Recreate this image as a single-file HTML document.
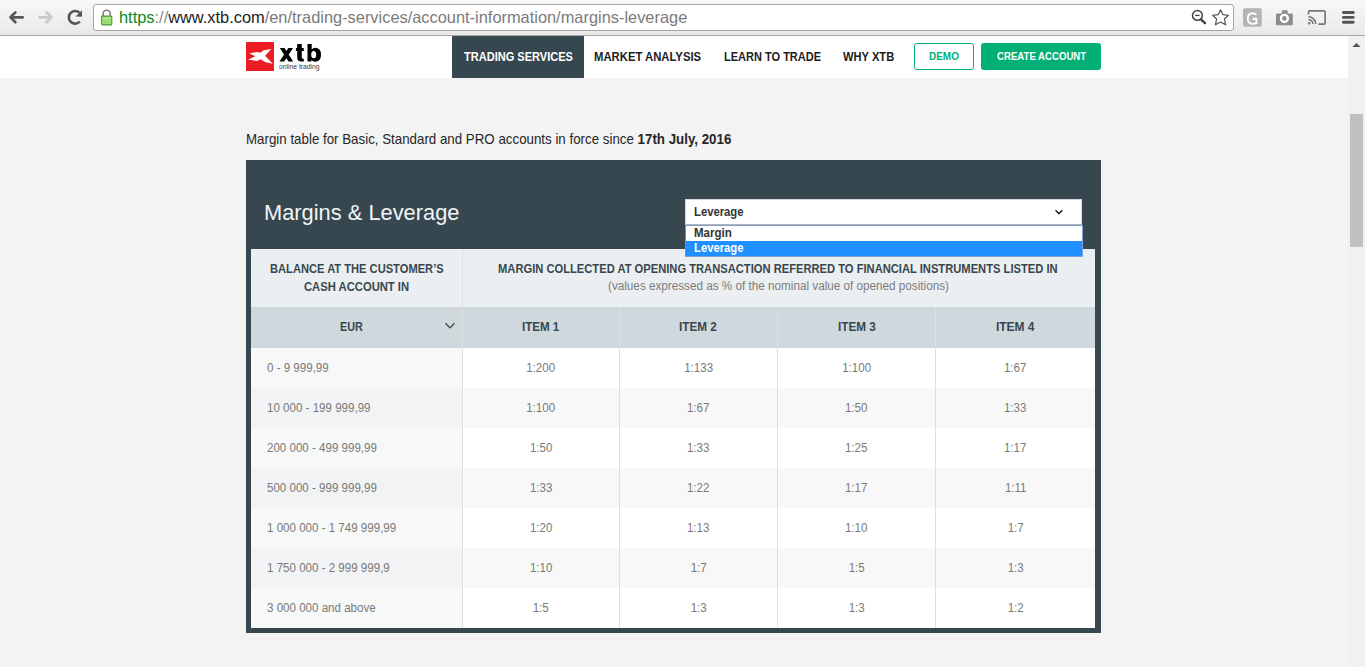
<!DOCTYPE html>
<html><head><meta charset="utf-8">
<style>
*{margin:0;padding:0;box-sizing:border-box}
html,body{width:1365px;height:667px;overflow:hidden;background:#f3f3f3;font-family:"Liberation Sans",sans-serif}
.abs{position:absolute}
.t{position:absolute;white-space:nowrap}
.t>span{display:inline-block;transform-origin:0 0}
#chrome{position:absolute;left:0;top:0;width:1365px;height:36px;background:linear-gradient(#f8f8f8,#e9e9e9);border-bottom:1px solid #a3a3a3}
#omni{position:absolute;left:93px;top:4px;width:1141px;height:27px;background:#fff;border:1px solid #a5a5a5;border-radius:3px}
#nav{position:absolute;left:0;top:36px;width:1348px;height:42px;background:#fff}
#sb{position:absolute;left:1348px;top:36px;width:17px;height:631px;background:#f1f1f1}
#panel{position:absolute;left:246px;top:160px;width:855px;height:473px;background:#37474f}
.dtxt{position:absolute;height:40px;line-height:40px;font-size:12.5px;color:#7a7a7a;white-space:nowrap}
.dtxt>span{display:inline-block;transform:scaleX(0.925);transform-origin:0 50%}
.dc{text-align:center}
.dc>span{transform-origin:50% 50%}
.vl{position:absolute;width:1px;background:#dedede}
</style></head><body>
<div id="chrome"></div>
<div id="omni"></div>
<svg class="abs" style="left:0;top:0" width="1365" height="36" viewBox="0 0 1365 36">
<g fill="none" stroke-linecap="round" stroke-linejoin="round">
<path d="M15.4 12.4 L10.5 17.3 L15.4 22.2 M10.7 17.3 L22.7 17.3" stroke="#575757" stroke-width="2.7"/>
<path d="M46.6 12.4 L51.5 17.3 L46.6 22.2 M51.3 17.3 L39.3 17.3" stroke="#cacaca" stroke-width="2.7"/>
<path d="M79.4 12.7 A6.3 6.3 0 1 0 79.9 21.5" stroke="#555" stroke-width="2.6" stroke-linecap="butt"/>
</g>
<path d="M82 10.2 L82 16.8 L75.6 16.6 Z" fill="#555"/>
<path d="M103.2 16 L103.2 13.4 A3.5 3.2 0 0 1 110.2 13.4 L110.2 16" fill="none" stroke="#808080" stroke-width="1.6"/>
<rect x="101.6" y="16.1" width="10.2" height="8.8" rx="0.8" fill="#9ddc72" stroke="#4f9a33" stroke-width="1.1"/>
<rect x="102.6" y="17.2" width="8.2" height="2" fill="#b7e79a"/>
<circle cx="1197.4" cy="15.4" r="4.9" fill="none" stroke="#444" stroke-width="1.5"/>
<path d="M1195.2 15.4 L1199.6 15.4" stroke="#444" stroke-width="1.3"/>
<path d="M1201.2 19.6 L1205 23.2" stroke="#444" stroke-width="2.4" stroke-linecap="round"/>
<path d="M1220.5 9.8 L1222.9 14.7 L1228.4 15.3 L1224.4 19 L1225.6 24.8 L1220.5 22 L1215.4 24.8 L1216.6 19 L1212.6 15.3 L1218.1 14.7 Z" fill="none" stroke="#555" stroke-width="1.2" stroke-linejoin="round"/>
<rect x="1243" y="8.2" width="18.8" height="18.5" rx="1.8" fill="#b4b4b4"/>
<path d="M1256.3 14.6 Q1255 13.3 1252.6 13.3 Q1247.8 13.3 1247.8 18.6 Q1247.8 23.9 1252.6 23.9 Q1255 23.9 1256.4 23 L1256.4 18.8 L1252.6 18.8" fill="none" stroke="#fff" stroke-width="1.9"/>
<rect x="1276" y="13.6" width="16.8" height="11.7" rx="1.2" fill="#8c8c8c"/>
<rect x="1281.8" y="10.3" width="5.9" height="4" rx="0.8" fill="#8c8c8c"/>
<circle cx="1284.4" cy="18.4" r="3.5" fill="none" stroke="#fff" stroke-width="2.4"/>
<path d="M1308.5 14.5 L1308.5 12 Q1308.5 10.9 1309.6 10.9 L1324 10.9 Q1325.1 10.9 1325.1 12 L1325.1 23 Q1325.1 24.1 1324 24.1 L1318.5 24.1" fill="none" stroke="#777" stroke-width="1.7"/>
<path d="M1308.4 16.8 A7.3 7.3 0 0 1 1315.7 24.1 M1308.4 19.6 A4.5 4.5 0 0 1 1312.9 24.1" fill="none" stroke="#777" stroke-width="1.6"/>
<circle cx="1309.2" cy="23.3" r="1.2" fill="#777"/>
<g stroke="#555" stroke-width="2.9" stroke-linecap="round"><path d="M1343.4 12.5 L1353.2 12.5 M1343.4 17.4 L1353.2 17.4 M1343.4 22.3 L1353.2 22.3"/></g>
</svg>
<div id="nav"></div>
<div id="sb"></div>
<div class="abs" style="left:1350px;top:114px;width:13px;height:133px;background:#c1c1c1"></div>
<svg class="abs" style="left:1348px;top:36px" width="17" height="17" viewBox="0 0 17 17"><path d="M4.5 11 L8.5 7 L12.5 11 Z" fill="#505050"/></svg>

<!-- logo -->
<div class="abs" style="left:246px;top:42px;width:28px;height:29px;background:#ec1c24"></div>
<svg class="abs" style="left:246px;top:42px" width="28" height="29" viewBox="0 0 28 29"><path d="M3.3 11.2 L11.4 10 L14.3 10.8 L17.7 8.3 L25.3 6.9 L19.1 13.8 L26.8 21.7 L19.6 20.3 L14.5 17.2 L11 18.9 L2.1 17.7 L9.3 14.3 Z" fill="#fff"/></svg>
<svg class="abs" style="left:0;top:0" width="330" height="75" viewBox="0 0 330 75">
<path d="M279.8 48 L284.5 48 L293.2 61.5 L288.5 61.5 Z M288.3 48 L293 48 L284.2 61.5 L279.5 61.5 Z" fill="#000"/>
<path d="M297.2 44.1 L301.8 44.1 L301.8 48.1 L303.8 48.1 L303.8 50.9 L301.8 50.9 L301.8 57.5 Q301.8 58.8 303 58.8 L303.8 58.8 L303.8 61.5 L301.5 61.5 Q297.2 61.5 297.2 57.5 L297.2 50.9 L295.9 50.9 L295.9 48.1 L297.2 48.1 Z" fill="#000"/>
<path d="M307.5 44.1 L311.7 44.1 L311.7 49.5 Q313 47.8 315 47.8 Q321 47.8 321 54.8 Q321 61.8 315 61.8 Q312.8 61.8 311.5 60 L311.3 61.5 L307.5 61.5 Z M313.7 51.1 Q311.2 51.1 311.2 54.65 Q311.2 58.2 313.7 58.2 Q316.2 58.2 316.2 54.65 Q316.2 51.1 313.7 51.1 Z" fill="#000" fill-rule="evenodd"/>
</svg>
<div class="abs" style="left:279px;top:63px;font-size:7.5px;color:#3a3a3a;line-height:8px;white-space:nowrap"><span style="display:inline-block;transform-origin:0 0;transform:scaleX(0.9)">online trading</span></div>

<div class="abs" style="left:452px;top:36px;width:132px;height:42px;background:#37474f"></div>
<div class="abs" style="left:914px;top:43px;width:60px;height:27px;border:1px solid #02b075;border-radius:3px;background:#fff"></div>
<div class="abs" style="left:981px;top:43px;width:120px;height:27px;border-radius:3px;background:#02b075"></div>

<div id="panel"></div>

<!-- table -->
<div class="abs" style="left:251px;top:249px;width:844px;height:58px;background:#eceff1"></div>
<div class="abs" style="left:251px;top:307px;width:844px;height:41px;background:#cfd8dc"></div>
<svg class="abs" style="left:444px;top:322px" width="12" height="8" viewBox="0 0 12 8"><path d="M1.5 1.3 L6 5.9 L10.5 1.3" fill="none" stroke="#37474f" stroke-width="1.3"/></svg>
<div class="abs" style="left:251px;top:348px;width:211px;height:40px;background:#f7f8f8"></div>
<div class="abs" style="left:463px;top:348px;width:632px;height:40px;background:#ffffff"></div>
<div class="dtxt" style="left:267px;top:348px"><span>0 - 9 999,99</span></div>
<div class="dtxt dc" style="left:463px;top:348px;width:156px"><span>1:200</span></div>
<div class="dtxt dc" style="left:620px;top:348px;width:157px"><span>1:133</span></div>
<div class="dtxt dc" style="left:778px;top:348px;width:157px"><span>1:100</span></div>
<div class="dtxt dc" style="left:936px;top:348px;width:159px"><span>1:67</span></div>
<div class="abs" style="left:251px;top:388px;width:211px;height:40px;background:#f2f3f4"></div>
<div class="abs" style="left:463px;top:388px;width:632px;height:40px;background:#f8f8f8"></div>
<div class="dtxt" style="left:267px;top:388px"><span>10 000 - 199 999,99</span></div>
<div class="dtxt dc" style="left:463px;top:388px;width:156px"><span>1:100</span></div>
<div class="dtxt dc" style="left:620px;top:388px;width:157px"><span>1:67</span></div>
<div class="dtxt dc" style="left:778px;top:388px;width:157px"><span>1:50</span></div>
<div class="dtxt dc" style="left:936px;top:388px;width:159px"><span>1:33</span></div>
<div class="abs" style="left:251px;top:428px;width:211px;height:40px;background:#f7f8f8"></div>
<div class="abs" style="left:463px;top:428px;width:632px;height:40px;background:#ffffff"></div>
<div class="dtxt" style="left:267px;top:428px"><span>200 000 - 499 999,99</span></div>
<div class="dtxt dc" style="left:463px;top:428px;width:156px"><span>1:50</span></div>
<div class="dtxt dc" style="left:620px;top:428px;width:157px"><span>1:33</span></div>
<div class="dtxt dc" style="left:778px;top:428px;width:157px"><span>1:25</span></div>
<div class="dtxt dc" style="left:936px;top:428px;width:159px"><span>1:17</span></div>
<div class="abs" style="left:251px;top:468px;width:211px;height:40px;background:#f2f3f4"></div>
<div class="abs" style="left:463px;top:468px;width:632px;height:40px;background:#f8f8f8"></div>
<div class="dtxt" style="left:267px;top:468px"><span>500 000 - 999 999,99</span></div>
<div class="dtxt dc" style="left:463px;top:468px;width:156px"><span>1:33</span></div>
<div class="dtxt dc" style="left:620px;top:468px;width:157px"><span>1:22</span></div>
<div class="dtxt dc" style="left:778px;top:468px;width:157px"><span>1:17</span></div>
<div class="dtxt dc" style="left:936px;top:468px;width:159px"><span>1:11</span></div>
<div class="abs" style="left:251px;top:508px;width:211px;height:40px;background:#f7f8f8"></div>
<div class="abs" style="left:463px;top:508px;width:632px;height:40px;background:#ffffff"></div>
<div class="dtxt" style="left:267px;top:508px"><span>1 000 000 - 1 749 999,99</span></div>
<div class="dtxt dc" style="left:463px;top:508px;width:156px"><span>1:20</span></div>
<div class="dtxt dc" style="left:620px;top:508px;width:157px"><span>1:13</span></div>
<div class="dtxt dc" style="left:778px;top:508px;width:157px"><span>1:10</span></div>
<div class="dtxt dc" style="left:936px;top:508px;width:159px"><span>1:7</span></div>
<div class="abs" style="left:251px;top:548px;width:211px;height:40px;background:#f2f3f4"></div>
<div class="abs" style="left:463px;top:548px;width:632px;height:40px;background:#f8f8f8"></div>
<div class="dtxt" style="left:267px;top:548px"><span>1 750 000 - 2 999 999,9</span></div>
<div class="dtxt dc" style="left:463px;top:548px;width:156px"><span>1:10</span></div>
<div class="dtxt dc" style="left:620px;top:548px;width:157px"><span>1:7</span></div>
<div class="dtxt dc" style="left:778px;top:548px;width:157px"><span>1:5</span></div>
<div class="dtxt dc" style="left:936px;top:548px;width:159px"><span>1:3</span></div>
<div class="abs" style="left:251px;top:588px;width:211px;height:40px;background:#f7f8f8"></div>
<div class="abs" style="left:463px;top:588px;width:632px;height:40px;background:#ffffff"></div>
<div class="dtxt" style="left:267px;top:588px"><span>3 000 000 and above</span></div>
<div class="dtxt dc" style="left:463px;top:588px;width:156px"><span>1:5</span></div>
<div class="dtxt dc" style="left:620px;top:588px;width:157px"><span>1:3</span></div>
<div class="dtxt dc" style="left:778px;top:588px;width:157px"><span>1:3</span></div>
<div class="dtxt dc" style="left:936px;top:588px;width:159px"><span>1:2</span></div>
<div class="vl" style="left:462px;top:249px;height:379px"></div>
<div class="vl" style="left:619px;top:307px;height:321px"></div>
<div class="vl" style="left:777px;top:307px;height:321px"></div>
<div class="vl" style="left:935px;top:307px;height:321px"></div>

<div class="t" style="left:119.01px;top:9.03px;font-size:16.5px;line-height:16.5px;font-weight:normal;color:#7b7b7b"><span style="transform:scaleX(0.9930)"><span style="color:#0a8a1e">https</span><span style="color:#8a8a8a">://</span><span style="color:#1d1d1d">www.xtb.com</span>/en/trading-services/account-information/margins-leverage</span></div>
<div class="t" style="left:246.08px;top:131.73px;font-size:14.5px;line-height:14.5px;font-weight:normal;color:#262626"><span style="transform:scaleX(0.9184)">Margin table for Basic, Standard and PRO accounts in force since <b>17th July, 2016</b></span></div>
<div class="t" style="left:264.08px;top:200.50px;font-size:22.8px;line-height:22.8px;font-weight:normal;color:#f2f4f5"><span style="transform:scaleX(0.9582)">Margins &amp; Leverage</span></div>
<div class="t" style="left:463.70px;top:49.80px;font-size:13px;line-height:13px;font-weight:bold;color:#ffffff"><span style="transform:scaleX(0.8484)">TRADING SERVICES</span></div>
<div class="t" style="left:594.13px;top:49.80px;font-size:13px;line-height:13px;font-weight:bold;color:#212121"><span style="transform:scaleX(0.8689)">MARKET ANALYSIS</span></div>
<div class="t" style="left:723.65px;top:49.80px;font-size:13px;line-height:13px;font-weight:bold;color:#212121"><span style="transform:scaleX(0.8469)">LEARN TO TRADE</span></div>
<div class="t" style="left:843.40px;top:49.80px;font-size:13px;line-height:13px;font-weight:bold;color:#212121"><span style="transform:scaleX(0.8576)">WHY XTB</span></div>
<div class="t" style="left:929.09px;top:51.19px;font-size:11px;line-height:11px;font-weight:bold;color:#02b075"><span style="transform:scaleX(0.9062)">DEMO</span></div>
<div class="t" style="left:996.60px;top:51.19px;font-size:11px;line-height:11px;font-weight:bold;color:#ffffff"><span style="transform:scaleX(0.8735)">CREATE ACCOUNT</span></div>
<div class="t" style="left:270.14px;top:262.00px;font-size:13px;line-height:13px;font-weight:bold;color:#37474f"><span style="transform:scaleX(0.8567)">BALANCE AT THE CUSTOMER&rsquo;S</span></div>
<div class="t" style="left:304.40px;top:280.00px;font-size:13px;line-height:13px;font-weight:bold;color:#37474f"><span style="transform:scaleX(0.8645)">CASH ACCOUNT IN</span></div>
<div class="t" style="left:498.04px;top:262.00px;font-size:13px;line-height:13px;font-weight:bold;color:#37474f"><span style="transform:scaleX(0.8596)">MARGIN COLLECTED AT OPENING TRANSACTION REFERRED TO FINANCIAL INSTRUMENTS LISTED IN</span></div>
<div class="t" style="left:608.46px;top:280.42px;font-size:12.5px;line-height:12.5px;font-weight:normal;color:#7c7c7c"><span style="transform:scaleX(0.9364)">(values expressed as % of the nominal value of opened positions)</span></div>
<div class="t" style="left:340.07px;top:320.00px;font-size:13px;line-height:13px;font-weight:bold;color:#37474f"><span style="transform:scaleX(0.8308)">EUR</span></div>
<div class="t" style="left:521.61px;top:320.00px;font-size:13px;line-height:13px;font-weight:bold;color:#37474f"><span style="transform:scaleX(0.8902)">ITEM 1</span></div>
<div class="t" style="left:679.40px;top:320.00px;font-size:13px;line-height:13px;font-weight:bold;color:#37474f"><span style="transform:scaleX(0.9024)">ITEM 2</span></div>
<div class="t" style="left:837.50px;top:320.00px;font-size:13px;line-height:13px;font-weight:bold;color:#37474f"><span style="transform:scaleX(0.9049)">ITEM 3</span></div>
<div class="t" style="left:996.08px;top:320.00px;font-size:13px;line-height:13px;font-weight:bold;color:#37474f"><span style="transform:scaleX(0.9195)">ITEM 4</span></div>

<!-- select -->
<div class="abs" style="left:685px;top:199px;width:397px;height:26px;background:#fff;border:1px solid #d8d8d8;border-bottom-color:#b9b4ae"></div>
<div class="abs" style="left:694px;top:204px;font-size:12px;font-weight:bold;color:#333;line-height:16px"><span style="display:inline-block;transform:scaleX(0.94);transform-origin:0 0">Leverage</span></div>
<svg class="abs" style="left:1054px;top:209px" width="10" height="6" viewBox="0 0 10 6"><path d="M1.5 1.2 L4.9 4.6 L8.3 1.2" fill="none" stroke="#222" stroke-width="1.5"/></svg>
<div class="abs" style="left:685px;top:225px;width:398px;height:32px;background:#fff;border:1px solid #7b9fd6;border-left-color:#7d8ea3"></div>
<div class="abs" style="left:686px;top:241px;width:396px;height:15px;background:#1e90ff"></div>
<div class="abs" style="left:694px;top:225px;font-size:12px;font-weight:bold;color:#333;line-height:16px"><span style="display:inline-block;transform:scaleX(0.96);transform-origin:0 0">Margin</span></div>
<div class="abs" style="left:694px;top:240px;font-size:12px;font-weight:bold;color:#fff;line-height:16px"><span style="display:inline-block;transform:scaleX(0.94);transform-origin:0 0">Leverage</span></div>
</body></html>
